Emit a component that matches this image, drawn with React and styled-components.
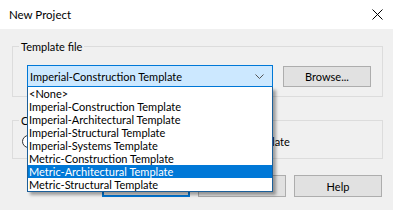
import styled, { createGlobalStyle } from "styled-components";

const GlobalStyle = createGlobalStyle`
  html, body {
    margin: 0;
    padding: 0;
    background: #f0f0f0;
  }
  * {
    box-sizing: border-box;
  }
  body {
    font-family: Lato, "Noto Sans", sans-serif;
    font-size: 11px;
    color: #000;
  }
`;

const Window = styled.div`
  width: 393px;
  height: 210px;
  overflow: hidden;
  background: #f0f0f0;
`;

const TitleBar = styled.div`
  height: 29px;
  background: #fff;
  display: flex;
  align-items: center;
  justify-content: space-between;
  padding: 0 10px 0 9px;
  font-size: 11.5px;
`;

const Body = styled.div`
  padding: 11px 10px 0 12px;
  display: flex;
  flex-direction: column;
`;

const Group = styled.fieldset`
  margin: ${(p) => p.$top || 0}px 0 0 0;
  border: 1px solid #dcdcdc;
  padding: 0 10px ${(p) => p.$bottom || 0}px ${(p) => p.$left || 14}px;
  min-width: 0;
  height: ${(p) => p.$height}px;
`;

const Legend = styled.legend`
  padding: 0 2px;
  margin-left: ${(p) => p.$ml || -8}px;
  line-height: 13px;
`;

const Row = styled.div`
  display: flex;
  align-items: center;
  gap: ${(p) => p.$gap || 10}px;
  padding-top: ${(p) => p.$pt || 0}px;
`;

const ComboWrap = styled.div`
  position: relative;
  width: 246px;
`;

const Combo = styled.div`
  height: 22px;
  border: 1px solid #0078d7;
  background: #cce8ff;
  display: flex;
  align-items: center;
  justify-content: space-between;
  padding: 0 8px 0 2px;
`;

const List = styled.ul`
  position: absolute;
  top: 100%;
  left: 0;
  width: 100%;
  margin: 0;
  padding: 0;
  list-style: none;
  background: #fff;
  border: 1px solid #1c5f99;
  border-top: none;
  box-shadow: 3px 3px 3px rgba(0, 0, 0, 0.35);
  z-index: 10;
`;

const Item = styled.li`
  height: 13px;
  line-height: 13px;
  padding-left: 1px;
  white-space: nowrap;
  background: ${(p) => (p.$selected ? "#0078d7" : "transparent")};
  color: ${(p) => (p.$selected ? "#fff" : "#000")};
`;

const Button = styled.button`
  width: 88px;
  height: ${(p) => p.$h || 22}px;
  background: #e1e1e1;
  border: ${(p) => (p.$default ? "2px solid #0078d7" : "1px solid #adadad")};
  font: inherit;
  color: #000;
  padding: 0;
`;

const Radio = styled.span`
  width: 13px;
  height: 13px;
  border-radius: 50%;
  border: 1px solid #333;
  background: #fff;
  display: inline-block;
  flex: none;
`;

const RadioLabel = styled.label`
  display: flex;
  align-items: center;
  gap: 4px;
  margin-right: ${(p) => p.$mr || 0}px;
`;

const Footer = styled.div`
  display: flex;
  justify-content: flex-end;
  gap: 8px;
  margin-top: 16px;
  padding-right: 1px;
`;

const Chevron = () => (
  <svg width="9" height="5" viewBox="0 0 9 5">
    <path d="M0.5 0.5 L4.5 4.5 L8.5 0.5" fill="none" stroke="#555" strokeWidth="1" />
  </svg>
);

const CloseIcon = () => (
  <svg width="11" height="11" viewBox="0 0 11 11">
    <path d="M0.5 0.5 L10.5 10.5 M10.5 0.5 L0.5 10.5" stroke="#000" strokeWidth="1" />
  </svg>
);

const templates = [
  "<None>",
  "Imperial-Construction Template",
  "Imperial-Architectural Template",
  "Imperial-Structural Template",
  "Imperial-Systems Template",
  "Metric-Construction Template",
  "Metric-Architectural Template",
  "Metric-Structural Template",
];

export default function App() {
  return (
    <Window>
      <GlobalStyle />
      <TitleBar>
        <span>New Project</span>
        <CloseIcon />
      </TitleBar>
      <Body>
        <Group $height={57} $bottom={10}>
          <Legend>Template file</Legend>
          <Row $pt={12}>
            <ComboWrap>
              <Combo>
                <span>Imperial-Construction Template</span>
                <Chevron />
              </Combo>
              <List>
                {templates.map((t, i) => (
                  <Item key={t} $selected={i === 6}>
                    {t}
                  </Item>
                ))}
              </List>
            </ComboWrap>
            <Button $h={21}>Browse...</Button>
          </Row>
        </Group>
        <Group $top={17} $height={45} $left={9}>
          <Legend $ml={-3}>Create new</Legend>
          <Row $pt={8} $gap={0}>
            <RadioLabel $mr={110}>
              <Radio />
              Project
            </RadioLabel>
            <RadioLabel>
              <Radio />
              Project template
            </RadioLabel>
          </Row>
        </Group>
        <Footer>
          <Button $default>OK</Button>
          <Button>Cancel</Button>
          <Button>Help</Button>
        </Footer>
      </Body>
    </Window>
  );
}
